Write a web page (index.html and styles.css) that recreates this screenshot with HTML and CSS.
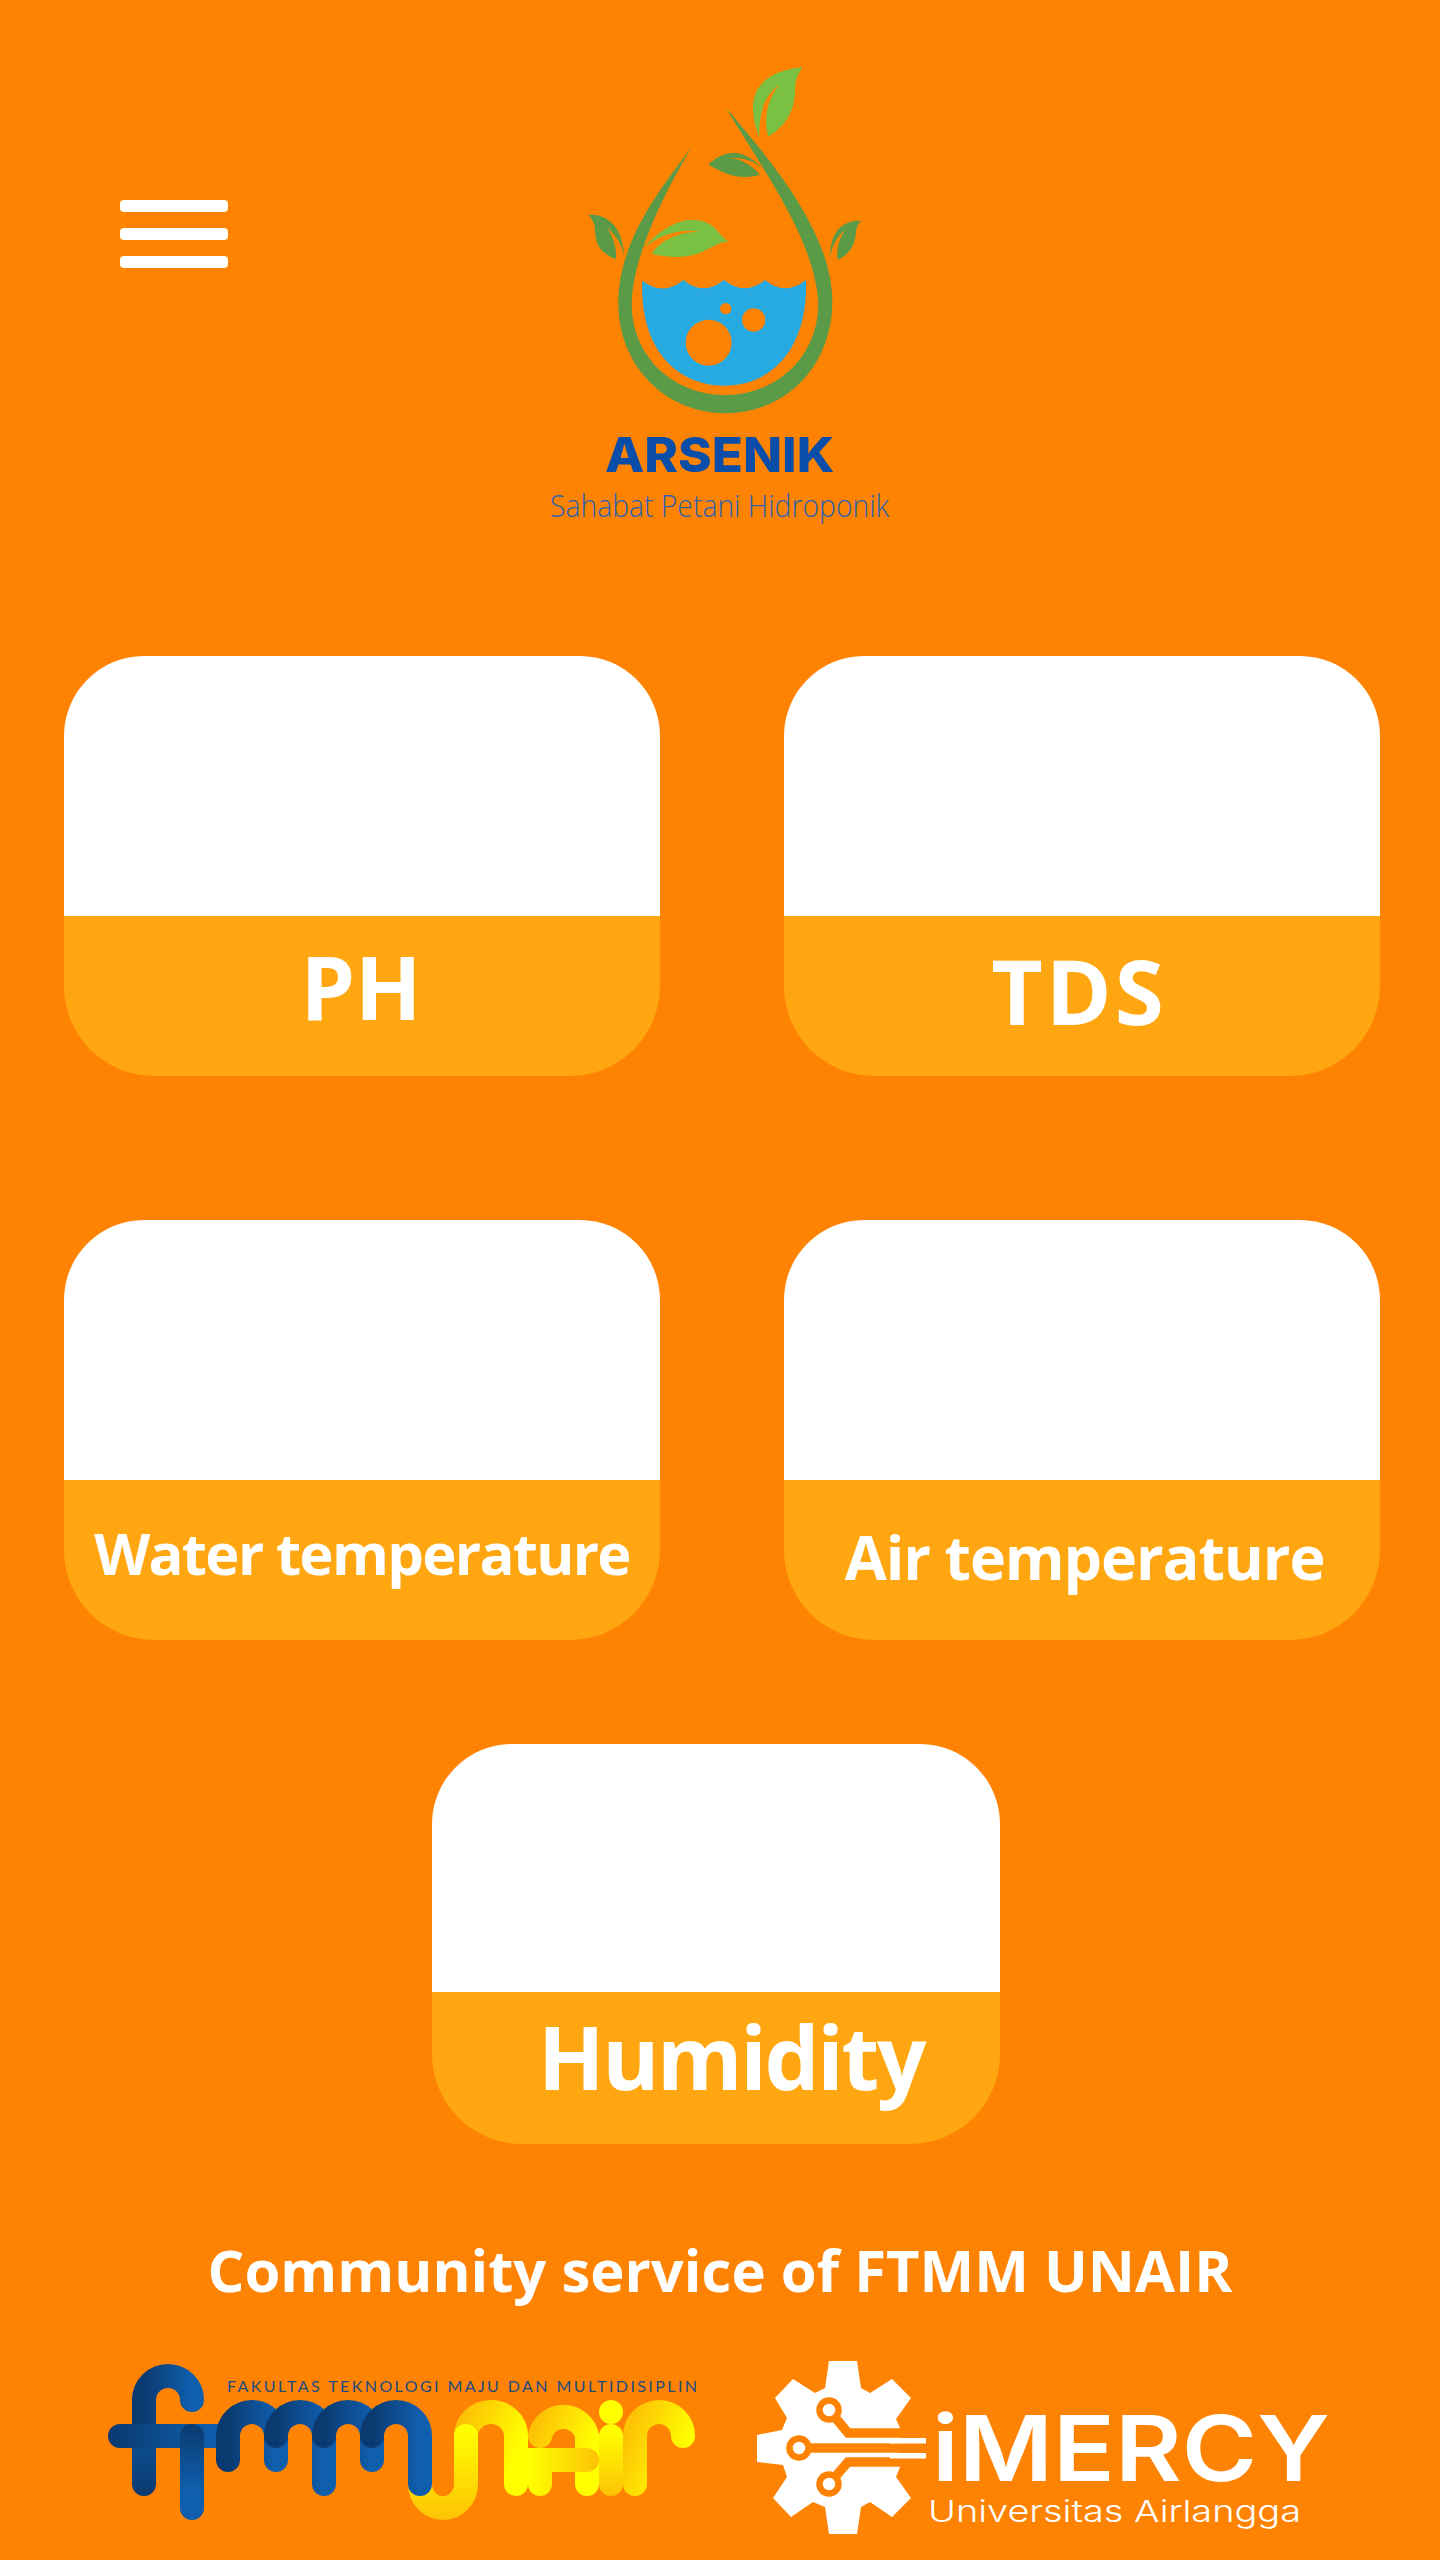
FILE: index.html
```html
<!DOCTYPE html>
<html>
<head>
<title>Arsenik</title>
<link rel="stylesheet" href="styles.css">
</head>
<body>

<div class="page">

  <div class="header">
    <div class="menu"><span></span><span></span><span></span></div>
    <svg class="logo" viewBox="0 0 1320 1500">
      <path class="stem" d="M575 322C470 460 355 610 355 790C355 980 500 1120 675 1120C860 1120 997 975 997 785C997 600 850 400 678 205C790 390 945 600 955 790C955 950 830 1065 675 1065C520 1065 395 950 395 790C398 660 480 480 575 322Z"/>
      <path class="water" d="M427 722Q490 770 550 720Q610 770 672 720Q735 770 795 720Q855 770 918 720C925 920 820 1037 672 1037C525 1037 418 920 427 722Z"/>
      <circle class="bubble" cx="626" cy="908" r="69"/>
      <circle class="bubble" cx="761" cy="840" r="35"/>
      <circle class="bubble" cx="677" cy="806" r="17"/>
      <path class="leafLight" d="M908 82C820 90 750 130 760 220C762 250 772 275 778 295C775 230 790 165 838 135C800 180 790 240 805 290C860 255 885 210 885 150C885 120 895 100 908 82Z"/>
      <path class="leafLight" d="M432 622C490 560 570 510 640 560C655 575 670 595 685 605C655 605 625 630 590 642C550 655 500 652 455 642C480 600 540 575 600 575C540 565 480 585 432 622Z"/>
      <path class="leafDark" d="M625 374C660 340 720 310 790 388C760 360 720 350 685 355C725 355 760 380 780 405C720 420 680 405 625 374Z"/>
      <path class="leafDark" d="M265 525C320 520 370 560 372 650C365 610 350 590 320 560C345 600 350 630 348 658C300 640 285 610 285 570C285 550 275 535 265 525Z"/>
      <path class="leafDark" d="M1083 542C1030 540 990 570 990 655C995 620 1010 590 1035 570C1015 600 1010 630 1012 660C1055 640 1065 610 1068 575C1070 560 1075 550 1083 542Z"/>
      <text class="logoName" x="315" y="1297" textLength="688" lengthAdjust="spacingAndGlyphs">ARSENIK</text>
      <text class="logoTag" x="150" y="1430" textLength="1018" lengthAdjust="spacingAndGlyphs">Sahabat Petani Hidroponik</text>
    </svg>
  </div>

  <div class="row row1">
    <div class="card">
      <div class="cardBody"></div>
      <div class="cardLabel lblPh">PH</div>
    </div>
    <div class="card">
      <div class="cardBody"></div>
      <div class="cardLabel lblTds">TDS</div>
    </div>
  </div>

  <div class="row row2">
    <div class="card">
      <div class="cardBody"></div>
      <div class="cardLabel lblWater">Water temperature</div>
    </div>
    <div class="card">
      <div class="cardBody"></div>
      <div class="cardLabel lblAir">Air temperature</div>
    </div>
  </div>

  <div class="row3">
    <div class="card cardSmall">
      <div class="cardBody"></div>
      <div class="cardLabel lblHumidity">Humidity</div>
    </div>
  </div>

  <div class="credit">Community service of FTMM UNAIR</div>

  <div class="sponsors">
    <svg class="ftmm" viewBox="0 0 660 230">
      <defs>
        <linearGradient id="blueH" x1="0" y1="0" x2="1" y2="0">
          <stop offset="0" stop-color="#0a3a70"/><stop offset="1" stop-color="#105fae"/>
        </linearGradient>
        <linearGradient id="bar" gradientUnits="userSpaceOnUse" x1="30" y1="0" x2="139" y2="0">
          <stop offset="0" stop-color="#0a3a70"/><stop offset="1" stop-color="#105fae"/>
        </linearGradient>
        <linearGradient id="fStem" gradientUnits="userSpaceOnUse" x1="0" y1="70" x2="0" y2="166">
          <stop offset="0" stop-color="#105fae"/><stop offset="1" stop-color="#0a3a70"/>
        </linearGradient>
        <linearGradient id="tStem" gradientUnits="userSpaceOnUse" x1="0" y1="94" x2="0" y2="190">
          <stop offset="0" stop-color="#0a3a70"/><stop offset=".7" stop-color="#105fae"/>
        </linearGradient>
        <linearGradient id="goldU" gradientUnits="userSpaceOnUse" x1="0" y1="190" x2="0" y2="100">
          <stop offset="0" stop-color="#fdc205"/><stop offset="1" stop-color="#ffff00"/>
        </linearGradient>
        <linearGradient id="goldH" x1="0" y1="0" x2="1" y2=".6">
          <stop offset="0" stop-color="#fdc205"/><stop offset="1" stop-color="#ffff00"/>
        </linearGradient>
        <linearGradient id="goldBar" gradientUnits="userSpaceOnUse" x1="450" y1="0" x2="519" y2="0">
          <stop offset="0" stop-color="#ffff00"/><stop offset="1" stop-color="#fdc205"/>
        </linearGradient>
        <linearGradient id="goldI" gradientUnits="userSpaceOnUse" x1="0" y1="100" x2="0" y2="166">
          <stop offset="0" stop-color="#ffff00"/><stop offset="1" stop-color="#fdc205"/>
        </linearGradient>
      </defs>
      <g class="strokes">
        <path stroke="url(#goldH)" d="M386 106A25 24 0 0 1 436 106V154"/>
        <path stroke="url(#goldU)" d="M340 154A23 24 0 0 0 386 154V106"/>
        <path stroke="url(#goldH)" d="M460 106A24 24 0 0 1 507 106V154"/>
        <path stroke="url(#goldBar)" d="M460 154V130H507"/>
        <path stroke="url(#goldI)" d="M531 106V154"/>
        <path stroke="url(#goldH)" d="M555 154V106A24 24 0 0 1 603 106"/>
        <path stroke="url(#fStem)" d="M64 154V70"/>
        <path stroke="url(#blueH)" d="M64 92V70A24 24 0 0 1 112 70"/>
        <path stroke="url(#bar)" d="M40 106H139"/>
        <path stroke="url(#tStem)" d="M112 106V178"/>
        <path stroke="url(#blueH)" d="M148 130V106A24 24 0 0 1 196 106V130"/>
        <path stroke="url(#blueH)" d="M196 106A24 24 0 0 1 244 106V154"/>
        <path stroke="url(#blueH)" d="M244 106A24 24 0 0 1 292 106V130"/>
        <path stroke="url(#blueH)" d="M292 106A24 24 0 0 1 340 106V154"/>
      </g>
      <circle cx="531" cy="82" r="12" fill="#ffff00"/>
      <text class="ftmmText" x="147" y="62" textLength="470">FAKULTAS TEKNOLOGI MAJU DAN MULTIDISIPLIN</text>
    </svg>

    <svg class="imercy" viewBox="0 0 620 230">
      <path class="gear" d="M89 31H117L121 58L130 63L152 49L171 68L156 89L160 98V137L156 147L171 168L152 187L130 172L121 177L117 204H89L85 177L73 172L51 187L33 168L47 147L43 135L17 132V105L42 100L47 88L35 68L53 49L75 63L85 58Z"/>
      <g class="traces">
        <path d="M89 80L108 103H186"/>
        <path d="M59 118H186"/>
        <path d="M89 154L108 132H186"/>
      </g>
      <circle class="node" cx="89" cy="80" r="9.5"/>
      <circle class="node" cx="59" cy="118" r="9.5"/>
      <circle class="node" cx="89" cy="154" r="9.5"/>
      <rect class="gearBar" x="150" y="108" width="36" height="5.5"/>
      <rect class="gearBar" x="150" y="123" width="36" height="5.5"/>
      <text class="imercyName" x="192" y="151" textLength="398" lengthAdjust="spacingAndGlyphs">iMERCY</text>
      <text class="imercyTag" x="188" y="192" textLength="373" lengthAdjust="spacingAndGlyphs">Universitas Airlangga</text>
    </svg>
  </div>

</div>

</body>
</html>
```

FILE: styles.css
```css
body {
  margin: 0;
  background-color: #FF8303;
  font-family: "Open Sans", "Noto Sans", sans-serif;
  color: #FFFFFF;
}
.page {
  height: 2560px;
  padding-top: 40px;
  box-sizing: border-box;
  overflow: hidden;
}
.header {
  display: flex;
  height: 500px;
  padding-left: 120px;
}
.menu {
  display: flex;
  flex-direction: column;
  gap: 16px;
  width: 108px;
  padding-top: 160px;
}
.menu span {
  height: 12px;
  border-radius: 4px;
  background-color: #FFFFFF;
}
.logo {
  width: 440px;
  height: 500px;
  margin-left: 272px;
}
.stem, .leafDark { fill: #5B9A46; }
.leafLight { fill: #7AC143; }
.water { fill: #27A9E1; }
.bubble { fill: #FF8303; }
.logoName {
  font-family: Inter, sans-serif;
  font-weight: 800;
  font-size: 145px;
  fill: #0B4EA9;
}
.logoTag {
  font-family: "Open Sans", sans-serif;
  font-weight: 300;
  font-size: 92px;
  fill: #2C62AE;
}

.row {
  display: grid;
  grid-template-columns: 596px 596px;
  gap: 124px;
  padding-left: 64px;
}
.row1 { margin-top: 116px; }
.row2 { margin-top: 144px; }
.row3 {
  display: flex;
  margin-top: 104px;
  padding-left: 432px;
}
.card {
  display: flex;
  flex-direction: column;
  height: 420px;
  border-radius: 80px 80px 90px 90px;
  overflow: hidden;
}
.cardSmall {
  width: 568px;
  height: 400px;
}
.cardBody {
  flex: 0 0 260px;
  background-color: #FFFFFF;
}
.cardSmall .cardBody { flex-basis: 248px; }
.cardLabel {
  flex: 1;
  display: flex;
  align-items: center;
  justify-content: center;
  background-color: #FFA611;
  font-weight: 700;
  line-height: 1;
  white-space: nowrap;
}
.lblPh { font-size: 87px; padding-bottom: 20px; padding-right: 2px; }
.lblTds { font-size: 89px; letter-spacing: 3px; padding-bottom: 12px; padding-right: 6px; }
.lblWater { font-size: 58px; letter-spacing: -1.7px; padding-bottom: 14px; }
.lblAir { font-size: 61px; letter-spacing: -1.1px; padding-bottom: 8px; padding-left: 5px; }
.lblHumidity { font-size: 87px; letter-spacing: -2.3px; padding-bottom: 23px; padding-left: 30px; }

.credit {
  margin-top: 86px;
  text-align: center;
  font-size: 58px;
  font-weight: 700;
  line-height: 80px;
}
.sponsors {
  display: flex;
  padding-left: 80px;
  margin-top: 20px;
}
.ftmm {
  width: 660px;
  height: 230px;
}
.imercy {
  width: 620px;
  height: 230px;
}
.strokes path {
  fill: none;
  stroke-width: 24;
  stroke-linecap: round;
}
.ftmmText {
  font-family: Lato, sans-serif;
  font-size: 16px;
  font-weight: 400;
  fill: #1C4A80;
}
.gear { fill: #FFFFFF; }
.traces path {
  fill: none;
  stroke: #FF8303;
  stroke-width: 9.5;
}
.node {
  fill: #FFFFFF;
  stroke: #FF8303;
  stroke-width: 6.5;
}
.gearBar { fill: #FFFFFF; }
.imercyName {
  font-family: Inter, sans-serif;
  font-size: 91px;
  font-weight: 600;
  fill: #FFFFFF;
}
.imercyTag {
  font-family: Inter, sans-serif;
  font-size: 30px;
  font-weight: 300;
  fill: #FFFFFF;
}
```
